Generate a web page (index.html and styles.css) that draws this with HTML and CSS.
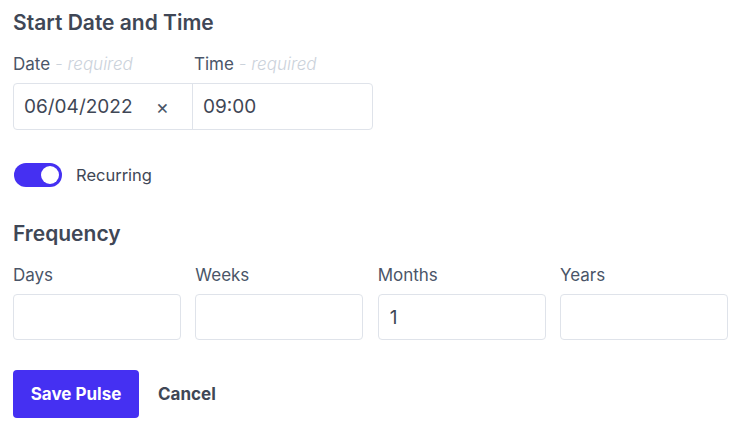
FILE: index.html
```html
<!DOCTYPE html>
<html>
<head>
<meta charset="utf-8">
<link rel="stylesheet" href="styles.css">
</head>
<body>
<div class="page">
  <h2 class="heading">Start Date and Time</h2>
  <div class="dt-labels">
    <div class="label dt-col">Date <span class="req">- required</span></div>
    <div class="label dt-col">Time <span class="req">- required</span></div>
  </div>
  <div class="dt-box">
    <div class="dt-part date-part"><span class="val">06/04/2022</span><span class="clear">×</span></div>
    <div class="dt-part time-part"><span class="val">09:00</span></div>
  </div>

  <div class="toggle-row">
    <span class="toggle"><span class="knob"></span></span>
    <span class="toggle-label">Recurring</span>
  </div>

  <h2 class="heading freq-heading">Frequency</h2>
  <div class="freq-grid">
    <div class="field"><div class="label">Days</div><div class="input"></div></div>
    <div class="field"><div class="label">Weeks</div><div class="input"></div></div>
    <div class="field"><div class="label">Months</div><div class="input">1</div></div>
    <div class="field"><div class="label">Years</div><div class="input"></div></div>
  </div>

  <div class="actions">
    <button class="btn-primary">Save Pulse</button>
    <button class="btn-link">Cancel</button>
  </div>
</div>
</body>
</html>
```
FILE: styles.css
```css
* { box-sizing: border-box; }
html, body { margin: 0; padding: 0; background: #fff; }
body { font-family: Inter, "Noto Sans", sans-serif; color: #4a5568; }
.page { padding: 9px 12px 0 13px; width: 740px; }
.heading { margin: 0; font-size: 21px; font-weight: 600; color: #3f4756; line-height: 28px; }
.dt-labels { display: flex; margin-top: 16px; }
.dt-col { width: 180px; }
.dt-col + .dt-col { padding-left: 1px; }
.label { font-size: 17px; line-height: 22px; color: #4a5568; }
.req { font-style: italic; color: #cbd2db; font-weight: 300; }
.dt-box { display: flex; width: 360px; height: 47px; margin-top: 8px; border: 1px solid #dfe3ea; border-radius: 4px; }
.dt-part { display: flex; align-items: center; width: 180px; padding-left: 10px; font-size: 19px; color: #3f4756; }
.date-part { border-right: 1px solid #dfe3ea; padding-right: 23px; justify-content: space-between; }
.clear { font-size: 20px; color: #4a5568; }
.toggle-row { display: flex; align-items: center; margin-top: 33px; gap: 14px; }
.toggle { display: flex; justify-content: flex-end; align-items: center; width: 48px; height: 24px; border-radius: 12px; background: #4530f2; padding: 3px; margin-left: 1px; }
.knob { width: 18px; height: 18px; border-radius: 50%; background: #fff; }
.toggle-label { font-size: 16.5px; color: #3f4756; }
.freq-heading { margin-top: 33px; }
.freq-grid { display: grid; grid-template-columns: repeat(4, 1fr); column-gap: 14.33px; width: 715px; margin-top: 16px; }
.field .input { margin-top: 8px; height: 46px; border: 1px solid #dfe3ea; border-radius: 4px; display: flex; align-items: center; padding-left: 11px; font-size: 19px; color: #3f4756; }
.actions { display: flex; align-items: center; margin-top: 30px; gap: 0; }
.btn-primary { height: 48px; width: 126px; border: 0; border-radius: 4px; background: #4530f2; color: #fff; font-family: inherit; font-size: 17px; font-weight: 700; padding: 0; }
.btn-link { background: none; border: 0; font-family: inherit; font-size: 17px; font-weight: 700; color: #3f4756; padding: 0 0 0 19px; }
```
